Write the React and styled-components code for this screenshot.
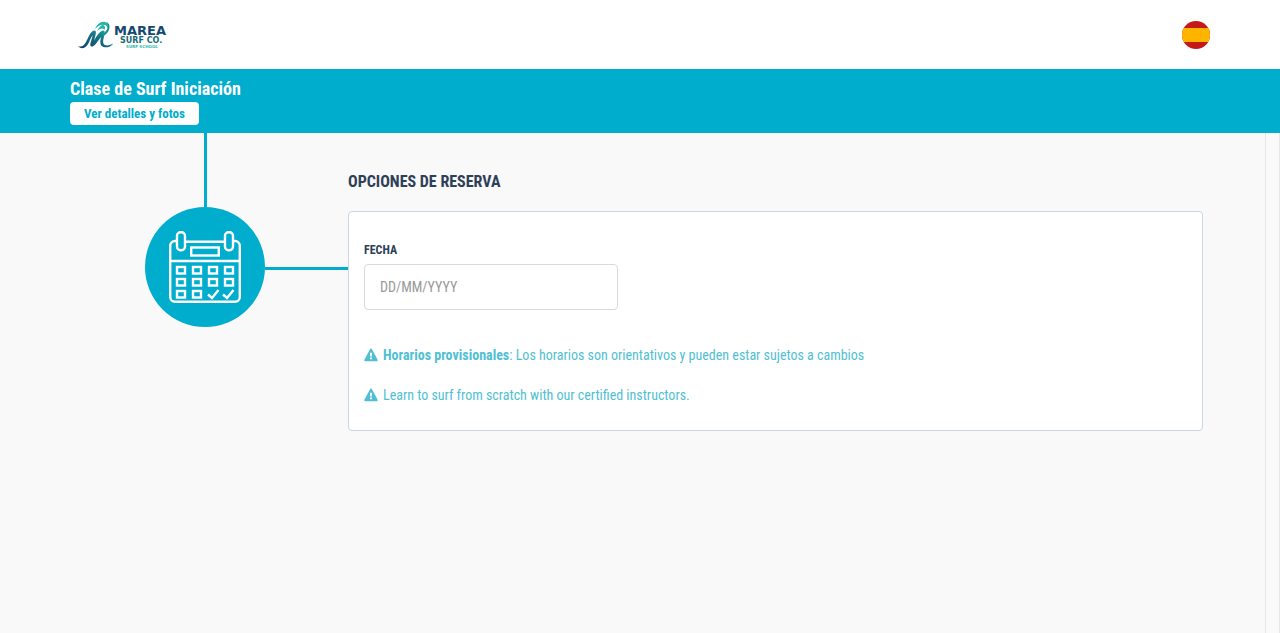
import React from "react";
import styled, { createGlobalStyle } from "styled-components";

const color = {
  brand: "#00adcd",
  ink: "#2e4057",
  info: "#50bfd4",
  page: "#f9f9f9",
  cardBorder: "#ccd6e0",
  fieldBorder: "#d9d9d9",
};

const GlobalStyle = createGlobalStyle`
  *, *::before, *::after { box-sizing: border-box; }
  body {
    margin: 0;
    background: ${color.page};
    color: ${color.ink};
    font-family: "Roboto Condensed", Roboto, "Liberation Sans", sans-serif;
    font-size: 14px;
    line-height: 20px;
  }
`;

const Page = styled.div`
  min-height: 100vh;
  display: flex;
  flex-direction: column;
`;

const Header = styled.header`
  display: flex;
  align-items: center;
  justify-content: space-between;
  height: 69px;
  padding: 0 70px;
  background: #fff;
`;

const LogoLink = styled.a`
  display: block;
  height: 40px;
  svg { display: block; }
`;

const LogoText = styled.text`
  font-family: "DejaVu Sans", sans-serif;
  font-weight: 700;
  font-size: ${({ $size }) => $size}px;
`;

const LanguageButton = styled.button`
  width: 28px;
  height: 28px;
  padding: 0;
  border: 0;
  border-radius: 50%;
  overflow: hidden;
  background: none;
  cursor: pointer;
  svg { display: block; }
`;

const Banner = styled.section`
  display: flex;
  flex-direction: column;
  align-items: flex-start;
  padding: 8px 70px;
  background: ${color.brand};
`;

const BannerTitle = styled.h1`
  margin: 0;
  padding-bottom: 1px;
  color: #fff;
  font-size: 18px;
  line-height: 24px;
  font-weight: 700;
`;

const DetailsButton = styled.button`
  height: 23px;
  padding: 0 14px;
  border: 0;
  border-radius: 4px;
  background: #fff;
  color: ${color.brand};
  font: inherit;
  font-size: 13px;
  font-weight: 700;
  cursor: pointer;
`;

const Body = styled.div`
  flex: 1;
  display: flex;
`;

const Content = styled.main`
  flex: 1;
  display: flex;
  padding: 0 62px 0 70px;
`;

const ScrollTrack = styled.div`
  width: 15px;
  border: solid #e6e8e8;
  border-width: 0 1px;
  background: #fafafa;
`;

const Steps = styled.div`
  flex: 0 0 278px;
`;

const StepLine = styled.div`
  width: 3px;
  height: 74px;
  margin-left: 134px;
  background: ${color.brand};
`;

const StepRow = styled.div`
  display: flex;
  align-items: center;
  padding-left: 75px;
`;

const StepCircle = styled.div`
  display: flex;
  align-items: center;
  justify-content: center;
  width: 120px;
  height: 120px;
  border-radius: 50%;
  background: ${color.brand};
`;

const StepConnector = styled.div`
  flex: 1;
  height: 3px;
  margin-top: 3px;
  background: ${color.brand};
`;

const Booking = styled.section`
  flex: 1;
  min-width: 0;
  padding-top: 37px;
`;

const SectionTitle = styled.h2`
  margin: 0 0 17px;
  font-size: 16px;
  line-height: 24px;
  font-weight: 700;
  text-transform: uppercase;
`;

const Card = styled.form`
  padding: 28px 15px 25px;
  border: 1px solid ${color.cardBorder};
  border-radius: 4px;
  background: #fff;
`;

const FieldLabel = styled.label`
  display: block;
  margin-bottom: 4px;
  font-size: 12px;
  line-height: 20px;
  font-weight: 700;
  text-transform: uppercase;
`;

const DateInput = styled.input`
  display: block;
  width: 254px;
  height: 46px;
  margin-bottom: 35px;
  padding: 0 15px;
  border: 1px solid ${color.fieldBorder};
  border-radius: 4px;
  background: #fff;
  color: ${color.ink};
  font: inherit;
  &::placeholder { color: #999; opacity: 1; }
`;

const Notice = styled.p`
  display: flex;
  align-items: center;
  gap: 5px;
  margin: 0;
  color: ${color.info};
  & + & { margin-top: 20px; }
  svg { flex: none; }
`;

const MareaLogo = () => (
  <svg width="106" height="40" viewBox="0 0 106 40" role="img" aria-label="Marea Surf Co.">
    <defs>
      <linearGradient id="wave" x1="0" y1="1" x2="1" y2="0">
        <stop offset="0" stopColor="#10426b" />
        <stop offset="0.55" stopColor="#146c86" />
        <stop offset="1" stopColor="#22b3a4" />
      </linearGradient>
    </defs>
    <path d="M8 31c5 2 7-2 9.500-7 2-4 4-8.500 7-8.500 2 0 1.500 3 .8 5.500l-1.300 4.500c3-4.500 5.500-9.500 9-10 2.500-.2 1.800 3.500.8 7-.8 3-1.300 6.500 1.200 7.500 2.500 1 5 0 8.500-1.500-3 3.500-7 4.500-10 3.500-4-1.300-3.500-6-2.300-10-3.500 3.500-6 9-8.700 9.500-2.500.3-2.500-2-1.700-4.500l2-7c-3.300 4-4.300 12-9.300 13C11 33.500 9 32.500 8 31z" fill="url(#wave)" />
    <path d="M25 14c2-5 6-8 10-7 3.500.8 4.500 4 2.500 6-.5-2-2-3.200-4-2.800 1.700 1 2 2.800 1 4.300-2.500-1.800-5-.8-7.500 1.500 2-4 4-6 6.500-6.300-3.500-.4-5.500 1.300-8.500 4.300z" fill="#25b5a5" />
    <path d="M31 22c5-1.500 9-6 8.500-11-.3-2-1.500-3.500-3-4 3.800 5-.5 9-5.500 15z" fill="#18928f" />
    <LogoText x="44" y="20" fill="#124a70" $size={13}>MAREA</LogoText>
    <LogoText x="50" y="28" fill="#176a78" $size={8}>SURF CO.</LogoText>
    <LogoText x="56" y="33" fill="#2fb9ab" $size={4}>SURF SCHOOL</LogoText>
  </svg>
);

const SpainFlag = () => (
  <svg width="28" height="28" viewBox="0 0 28 28" aria-hidden="true">
    <rect width="28" height="28" fill="#c51917" />
    <rect y="7" width="28" height="14" fill="#ffb400" />
  </svg>
);

const dayCells = [
  [7, 35], [23, 35], [39, 35], [55, 35],
  [7, 47], [23, 47], [39, 47], [55, 47],
  [7, 59], [23, 59],
];

const CalendarIcon = () => (
  <svg width="72" height="72" viewBox="0 0 72 72" fill="none" stroke="#fff" strokeWidth="2.400" aria-hidden="true">
    <path d="M8 10H6a4.800 4.800 0 0 0-4.800 5v51a4.800 4.800 0 0 0 4.800 4.800h60a4.800 4.800 0 0 0 4.800-4.800V15a4.800 4.800 0 0 0-4.800-5h-2M16 10.800h40M1 30h70" />
    <rect x="8" y="1.200" width="8" height="18" rx="3.500" />
    <rect x="56" y="1.200" width="8" height="18" rx="3.500" />
    <rect x="22.200" y="16.500" width="27.600" height="8" />
    {dayCells.map(([x, y]) => (
      <rect key={`${x}-${y}`} x={x + 1} y={y + 1} width="8" height="6.500" />
    ))}
    <path d="m39 63.500 4 3.500 6.500-8M54 63.500l4 3.500 6.500-8" />
  </svg>
);

const WarningIcon = () => (
  <svg width="14" height="14" viewBox="0 0 15 14" aria-hidden="true">
    <path
      fill="currentColor"
      fillRule="evenodd"
      d="M6.600.6a1 1 0 0 1 1.800 0l6.200 11.600a1 1 0 0 1-.9 1.500H1.300a1 1 0 0 1-.9-1.500zM6.300 4.500l.3 4.200h1.800l.3-4.200zM6.500 9.700v1.800h2V9.700z"
    />
  </svg>
);

export default function App() {
  return (
    <>
      <GlobalStyle />
      <Page>
        <Header>
          <LogoLink href="#"><MareaLogo /></LogoLink>
          <LanguageButton type="button" aria-label="Español"><SpainFlag /></LanguageButton>
        </Header>
        <Banner>
          <BannerTitle>Clase de Surf Iniciación</BannerTitle>
          <DetailsButton type="button">Ver detalles y fotos</DetailsButton>
        </Banner>
        <Body>
          <Content>
            <Steps>
              <StepLine />
              <StepRow>
                <StepCircle><CalendarIcon /></StepCircle>
                <StepConnector />
              </StepRow>
            </Steps>
            <Booking>
              <SectionTitle>Opciones de reserva</SectionTitle>
              <Card>
                <FieldLabel htmlFor="date">Fecha</FieldLabel>
                <DateInput id="date" type="text" placeholder="DD/MM/YYYY" />
                <Notice>
                  <WarningIcon />
                  <span><strong>Horarios provisionales</strong>: Los horarios son orientativos y pueden estar sujetos a cambios</span>
                </Notice>
                <Notice>
                  <WarningIcon />
                  <span>Learn to surf from scratch with our certified instructors.</span>
                </Notice>
              </Card>
            </Booking>
          </Content>
          <ScrollTrack />
        </Body>
      </Page>
    </>
  );
}
